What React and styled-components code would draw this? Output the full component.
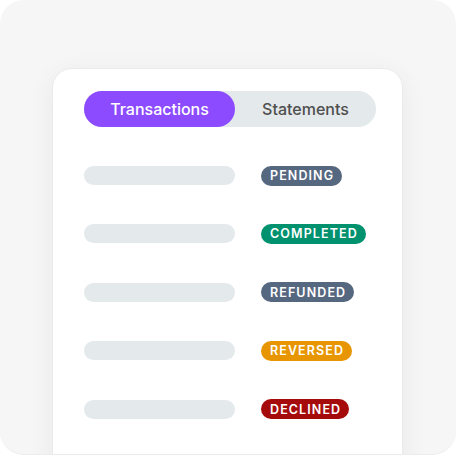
import React, { useState } from 'react';
import styled, { createGlobalStyle } from 'styled-components';

const GlobalStyle = createGlobalStyle`
  html, body {
    margin: 0;
    padding: 0;
    background: #ffffff;
  }
  body {
    font-family: Inter, "Noto Sans", sans-serif;
  }
`;

const Frame = styled.div`
  width: 456px;
  height: 455px;
  box-sizing: border-box;
  border-radius: 24px;
  background: #f6f6f6;
  border-bottom: 1px solid #ececec;
  overflow: hidden;
  padding: 68px 0 0 52px;
`;

const Card = styled.div`
  width: 351px;
  height: 420px;
  box-sizing: border-box;
  background: #ffffff;
  border: 1px solid #ebebeb;
  border-radius: 20px;
  box-shadow: 0 6px 28px rgba(0, 0, 0, 0.06);
  padding: 22px 0 0 31px;
`;

const Tabs = styled.div`
  display: flex;
  width: 292px;
  height: 36px;
  border-radius: 18px;
  background: #e4e9eb;
`;

const Tab = styled.button`
  flex: ${(p) => (p.$active ? '0 0 151px' : '1')};
  border: none;
  border-radius: 18px;
  padding: 0;
  font-family: inherit;
  font-size: 16px;
  font-weight: 500;
  cursor: pointer;
  background: ${(p) => (p.$active ? '#8c4bff' : 'transparent')};
  color: ${(p) => (p.$active ? '#ffffff' : '#4f4f4f')};
`;

const List = styled.div`
  display: flex;
  flex-direction: column;
  gap: 38.4px;
  margin-top: 38.5px;
`;

const Row = styled.div`
  display: flex;
  align-items: center;
  gap: 26px;
  height: 20px;
`;

const Bar = styled.div`
  width: 151px;
  height: 19px;
  border-radius: 10px;
  background: #e4e9eb;
`;

const Badge = styled.span`
  display: inline-flex;
  align-items: center;
  height: 20px;
  padding: 0 8px 0 9px;
  border-radius: 10px;
  background: ${(p) => p.$color};
  color: #ffffff;
  font-size: 12.5px;
  font-weight: 600;
  letter-spacing: 1.1px;
`;

const statuses = [
  { label: 'PENDING', color: '#566780' },
  { label: 'COMPLETED', color: '#00916f' },
  { label: 'REFUNDED', color: '#566780' },
  { label: 'REVERSED', color: '#e79500' },
  { label: 'DECLINED', color: '#a50b0b' },
];

export default function App() {
  const [tab, setTab] = useState('transactions');

  return (
    <>
      <GlobalStyle />
      <Frame>
        <Card>
          <Tabs>
            <Tab $active={tab === 'transactions'} onClick={() => setTab('transactions')}>
              Transactions
            </Tab>
            <Tab $active={tab === 'statements'} onClick={() => setTab('statements')}>
              Statements
            </Tab>
          </Tabs>
          <List>
            {statuses.map((s) => (
              <Row key={s.label}>
                <Bar />
                <Badge $color={s.color}>{s.label}</Badge>
              </Row>
            ))}
          </List>
        </Card>
      </Frame>
    </>
  );
}
